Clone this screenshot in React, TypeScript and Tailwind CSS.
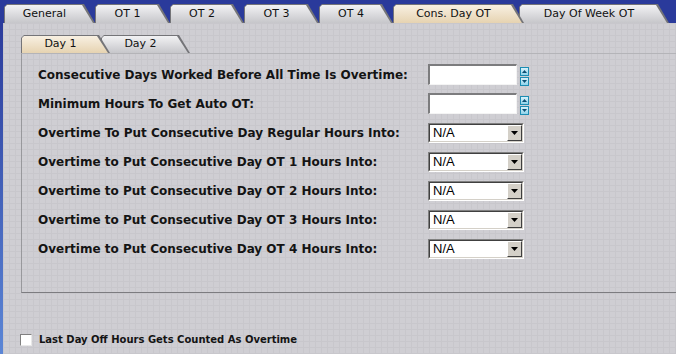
import React from "react";
import clsx from "clsx";

type TabProps = {
  label: string;
  active?: boolean;
  className?: string;
  small?: boolean;
};

const Tab: React.FC<TabProps> = ({ label, active, className, small }) => {
  return (
    <div
      className={clsx(
        "relative shrink-0 bg-[#747478] pt-px pl-px pr-[2px] [clip-path:polygon(0_3px,3px_0,calc(100%-11px)_0,100%_100%,0_100%)]",
        small ? "h-[18px]" : "h-[19px]",
        { "z-10": active },
        className
      )}
    >
      <div
        className={clsx(
          "h-full flex items-center justify-center pr-[9px] text-[11px] text-[#111] [clip-path:polygon(0_2px,2px_0,calc(100%-11px)_0,100%_100%,0_100%)]",
          {
            "bg-[linear-gradient(#f8f0e2,#e6d3b1)]": active,
            "bg-[linear-gradient(#f2f2f4,#c6c6ca)]": !active,
          }
        )}
      >
        {label}
      </div>
    </div>
  );
};

const Spinner: React.FC = () => (
  <div className="flex flex-col gap-px self-end">
    {["up", "down"].map((dir) => (
      <div
        key={dir}
        className="w-[9px] h-[9px] border border-[#1c8db3] bg-[linear-gradient(#d8f2fb,#8fd3ea)] flex items-center justify-center"
      >
        <svg width="5" height="3" viewBox="0 0 5 3">
          {dir === "up" ? (
            <polygon points="0,3 2.5,0 5,3" fill="#0b4f73" />
          ) : (
            <polygon points="0,0 2.5,3 5,0" fill="#0b4f73" />
          )}
        </svg>
      </div>
    ))}
  </div>
);

const NumberField: React.FC = () => (
  <div className="flex items-start gap-[3px] h-[22px]">
    <div className="w-[89px] h-[21px] bg-white border-t-2 border-l-2 border-[#7c7c7e] border-b border-r border-b-[#f4f4f4] border-r-[#f4f4f4]" />
    <Spinner />
  </div>
);

const SelectField: React.FC = () => (
  <div className="w-[96px] h-[20px] border border-t-[#808080] border-l-[#808080] border-b-white border-r-white">
    <div className="h-full flex items-center bg-white border border-t-[#404040] border-l-[#404040] border-b-[#d4d0c8] border-r-[#d4d0c8]">
      <span className="flex-1 pl-[3px] text-[13px] leading-none font-['Liberation_Sans',Arial,sans-serif] text-black">
        N/A
      </span>
      <div className="w-[15px] h-full bg-[#d4d0c8] border border-t-white border-l-white border-b-[#404040] border-r-[#404040] flex items-center justify-center">
        <svg width="7" height="4" viewBox="0 0 7 4">
          <polygon points="0,0 7,0 3.5,4" fill="#000" />
        </svg>
      </div>
    </div>
  </div>
);

const rows: { label: string; kind: "number" | "select" }[] = [
  { label: "Consecutive Days Worked Before All Time Is Overtime:", kind: "number" },
  { label: "Minimum Hours To Get Auto OT:", kind: "number" },
  { label: "Overtime To Put Consecutive Day Regular Hours Into:", kind: "select" },
  { label: "Overtime to Put Consecutive Day OT 1 Hours Into:", kind: "select" },
  { label: "Overtime to Put Consecutive Day OT 2 Hours Into:", kind: "select" },
  { label: "Overtime to Put Consecutive Day OT 3 Hours Into:", kind: "select" },
  { label: "Overtime to Put Consecutive Day OT 4 Hours Into:", kind: "select" },
];

export default function App() {
  return (
    <div className="w-[676px] h-[354px] overflow-hidden flex flex-col bg-[#2a3a9b] font-['DejaVu_Sans',Verdana,sans-serif]">
      {/* top tab strip */}
      <div className="h-[23px] pt-[4px] pl-[4px] flex items-end">
        <Tab label="General" className="w-[91px]" />
        <Tab label="OT 1" className="w-[75px]" />
        <Tab label="OT 2" className="w-[74px]" />
        <Tab label="OT 3" className="w-[75px]" />
        <Tab label="OT 4" className="w-[74px]" />
        <Tab label="Cons. Day OT" active className="w-[131px]" />
        <Tab label="Day Of Week OT" className="w-[150px] -ml-[5px]" />
      </div>

      {/* panel */}
      <div className="flex-1 flex">
        <div className="w-[3px] bg-[linear-gradient(#2a3a9b,#5b86d6)]" />
        <div className="flex-1 flex flex-col pl-[18px] pt-[12px] bg-[#cfced3] bg-[linear-gradient(#c8c7cc_1px,transparent_1px),linear-gradient(90deg,#c8c7cc_1px,transparent_1px)] [background-size:6px_6px]">
          <div className="flex items-end">
            <Tab label="Day 1" active small className="w-[89px]" />
            <Tab label="Day 2" small className="w-[89px] -ml-[9px]" />
          </div>

          <div className="h-[240px] border-l border-t border-b border-l-[#98989c] border-t-[#b4b4b8] border-b-[#7c7c80] pt-[6px] pl-[16px]">
            {rows.map((row) => (
              <div key={row.label} className="h-[29px] flex items-center">
                <div className="w-[390px] text-[12px] font-bold text-[#141414]">
                  {row.label}
                </div>
                {row.kind === "number" ? <NumberField /> : <SelectField />}
              </div>
            ))}
          </div>

          <div className="mt-[39px] flex items-center gap-[7px] -ml-px">
            <div className="w-[12px] h-[12px] bg-white border border-t-[#808080] border-l-[#808080] border-b-[#e8e8e8] border-r-[#e8e8e8]" />
            <span className="text-[10px] font-bold text-[#141414]">
              Last Day Off Hours Gets Counted As Overtime
            </span>
          </div>
        </div>
      </div>
    </div>
  );
}
